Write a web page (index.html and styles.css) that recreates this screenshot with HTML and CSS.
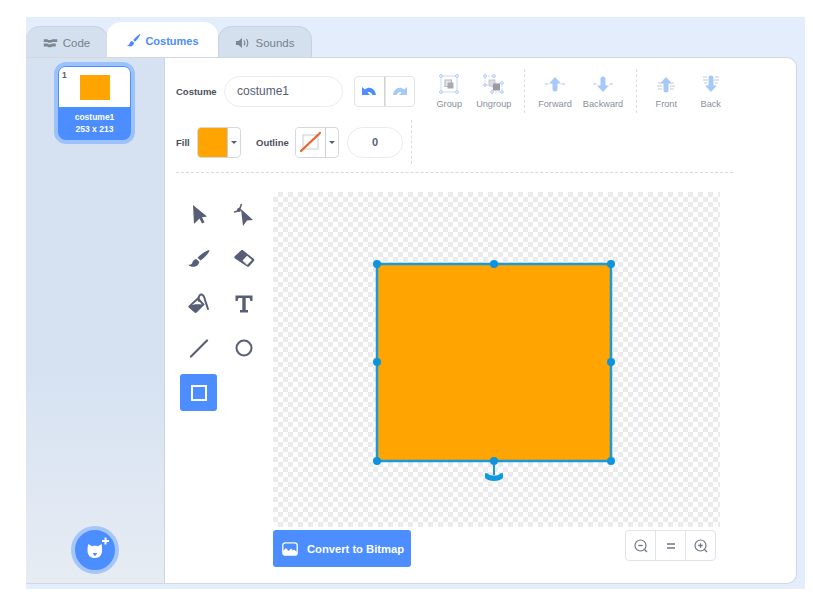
FILE: index.html
```html
<!DOCTYPE html>
<html lang="en">
<head>
    <meta charset="UTF-8">
    <title>Costumes</title>
    <link rel="stylesheet" href="styles.css">
</head>
<body>
    <div class="app">
        <div class="tabs">
            <div class="tab tab-code">
                <svg width="15" height="10" viewBox="0 0 20 12"><path d="M1 1h5l1 1h4l1-1h7v3.500h-7l-1 1H7l-1-1H1zM1 6.500h5l1 1h4l1-1h5v4h-5l-1 1H7l-1-1H1z" fill="#7d8794"/></svg>
                <span>Code</span>
            </div>
            <div class="tab tab-active">
                <svg width="15" height="15" viewBox="0 0 20 20"><path d="M18 1.500c.8-.5 1.300.2.900 1-1.500 3.200-4.300 6.800-7 9l-2.300-2.200C11.800 6.600 15 3.400 18 1.500zM8.300 10.500l2.500 2.400c-.2 2.600-2.400 5-5.300 5.100-1.600.1-3.200-.6-4-1.900 1.800.2 2.800-.7 3.300-2.200.5-2 1.800-3.200 3.500-3.400z" fill="#4c8dff"/></svg>
                <span>Costumes</span>
            </div>
            <div class="tab tab-sounds">
                <svg width="15" height="12" viewBox="0 0 15 12"><path d="M1 4h2.500L7 1v10L3.500 8H1z" fill="#7d8794"/><path d="M9 3.500c1 1.500 1 3.500 0 5M11.500 2c1.600 2.500 1.600 5.500 0 8" fill="none" stroke="#7d8794" stroke-width="1.200"/></svg>
                <span>Sounds</span>
            </div>
        </div>

        <div class="panel">
            <div class="sidebar">
                <div class="thumb">
                    <div class="thumb-top">
                        <span class="thumb-num">1</span>
                        <div class="thumb-shape"></div>
                    </div>
                    <div class="thumb-name">costume1</div>
                    <div class="thumb-size">253 x 213</div>
                </div>
                <div class="add-btn">
                    <svg width="40" height="40" viewBox="0 0 40 40">
                        <path d="M13.500 14c1.500 1 2.500 1.800 3.500 2.300 2-.6 4-.6 6 0 1-.5 2-1.300 3.500-2.300.5 2 .6 4 .6 6.500 0 5-3.200 7.500-7.300 7.500s-7.300-2.500-7.300-7.500c0-2.500.2-4.500 1-6.500z" fill="#fff"/>
                        <path d="M18 23.500h4l-2 1.500zM20 25v1" fill="#4c8dff" stroke="#4c8dff"/>
                        <path d="M29.500 7.500h2v2.500H34v2h-2.500v2.500h-2V12H27v-2h2.500z" fill="#fff"/>
                    </svg>
                </div>
            </div>

            <div class="editor">
                <div class="row row-one">
                    <span class="label label-costume">Costume</span>
                    <div class="pill pill-name">costume1</div>
                    <div class="btn-group undo-group">
                        <div class="seg seg-on">
                            <svg width="16" height="12" viewBox="0 0 16 12"><path d="M1 2v8h8L6.500 7.500c1.500-.8 3.500-.5 5 2.500h3.500C14 4 9 .5 3.800 4.500z" fill="#4c8dff"/></svg>
                        </div>
                        <div class="seg">
                            <svg width="16" height="12" viewBox="0 0 16 12"><path d="M15 2v8H7l2.500-2.500c-1.500-.8-3.500-.5-5 2.500H1C2 4 7 .5 12.200 4.500z" fill="#a6c8fb"/></svg>
                        </div>
                    </div>
                    <div class="tool-set set-group">
                        <div class="tool-item w-44">
                            <svg width="20" height="20" viewBox="0 0 20 20"><rect x="2" y="2" width="16" height="16" fill="none" stroke="#b9d0f4" stroke-width=".8"/><g fill="#fff" stroke="#a6c8fb"><circle cx="2" cy="2" r="1.400"/><circle cx="18" cy="2" r="1.400"/><circle cx="2" cy="18" r="1.400"/><circle cx="18" cy="18" r="1.400"/></g><rect x="6" y="6" width="6.500" height="6.500" fill="#e6e6ea" stroke="#b4b4bb"/><rect x="8.500" y="8.500" width="6" height="6" fill="#a9a9b2"/></svg>
                            <span>Group</span>
                        </div>
                        <div class="tool-item w-44">
                            <svg width="22" height="20" viewBox="0 0 22 20"><rect x="2" y="2" width="9" height="9" fill="none" stroke="#b9d0f4" stroke-width=".8" stroke-dasharray="2 1"/><rect x="9" y="9" width="10" height="9" fill="none" stroke="#b9d0f4" stroke-width=".8" stroke-dasharray="2 1"/><g fill="#fff" stroke="#a6c8fb"><circle cx="2" cy="2" r="1.300"/><circle cx="11" cy="2" r="1.300"/><circle cx="2" cy="11" r="1.300"/><circle cx="19" cy="9" r="1.300"/><circle cx="9" cy="18" r="1.300"/><circle cx="19" cy="18" r="1.300"/></g><rect x="6" y="6" width="6" height="6" fill="#dcdce2" stroke="#b4b4bb" stroke-width=".7"/><rect x="10" y="9.500" width="7" height="7" fill="#9a9aa5"/></svg>
                            <span>Ungroup</span>
                        </div>
                    </div>
                    <div class="tool-set set-order">
                        <div class="tool-item w-48">
                            <svg width="20" height="20" viewBox="0 0 20 20"><path d="M10 3l6 6.500h-3.500V15a2.500 2.500 0 0 1-5 0V9.500H4z" fill="#a6c8fb"/><path d="M0 10h3.500M16.500 10H20" stroke="#bcc3cc" stroke-width="1"/></svg>
                            <span>Forward</span>
                        </div>
                        <div class="tool-item w-48">
                            <svg width="20" height="20" viewBox="0 0 20 20"><path d="M10 18l-6-6.500h3.500V5a2.500 2.500 0 0 1 5 0v6.500H16z" fill="#a6c8fb"/><path d="M0 10h3.500M16.500 10H20" stroke="#bcc3cc" stroke-width="1"/></svg>
                            <span>Backward</span>
                        </div>
                    </div>
                    <div class="tool-set set-end">
                        <div class="tool-item w-44">
                            <svg width="20" height="20" viewBox="0 0 20 20"><path d="M10 3l6 6.500h-3.500V16a2.500 2.500 0 0 1-5 0V9.500H4z" fill="#a6c8fb"/><path d="M2 9h2.500M1 12h5M2 15h4M15.500 9H18M14 12h5M14 15h4" stroke="#bcc3cc" stroke-width=".9"/></svg>
                            <span>Front</span>
                        </div>
                        <div class="tool-item w-44">
                            <svg width="20" height="20" viewBox="0 0 20 20"><path d="M10 18l-6-6.500h3.500V4a2.500 2.500 0 0 1 5 0v7.500H16z" fill="#a6c8fb"/><path d="M2 3h4M2 6h5M3 9h3M14 3h4M13 6h5M14 9h3" stroke="#bcc3cc" stroke-width=".9"/></svg>
                            <span>Back</span>
                        </div>
                    </div>
                </div>

                <div class="row row-two">
                    <span class="label label-fill">Fill</span>
                    <div class="swatch">
                        <div class="swatch-color"></div>
                        <div class="swatch-arrow"><i class="caret"></i></div>
                    </div>
                    <span class="label label-outline">Outline</span>
                    <div class="swatch">
                        <div class="swatch-color swatch-none">
                            <svg width="29" height="28" viewBox="0 0 29 28"><rect x="7" y="7" width="15" height="14" fill="#fff" stroke="#c8ccd2"/><path d="M5 23L24 5" stroke="#f0602a" stroke-width="2.200" stroke-linecap="round"/></svg>
                        </div>
                        <div class="swatch-arrow"><i class="caret"></i></div>
                    </div>
                    <div class="pill pill-num">0</div>
                    <div class="vsep"></div>
                </div>

                <div class="body">
                    <div class="tools">
                        <div class="tool">
                            <svg width="20" height="22" viewBox="0 0 20 22"><path d="M4 1l14 11.500-5 .8 2.500 5-2.500 1.200-2.500-5L5 20z" fill="#575e75"/></svg>
                        </div>
                        <div class="tool">
                            <svg width="24" height="24" viewBox="0 0 24 24"><path d="M9 6l12 11-6 .5-4 5.500z" fill="#575e75"/><path d="M2 9c3 0 6-2 7.500-8" fill="none" stroke="#575e75" stroke-width="1.500"/><circle cx="7" cy="7" r="2" fill="#575e75"/></svg>
                        </div>
                        <div class="tool">
                            <svg width="24" height="22" viewBox="0 0 24 22"><path d="M22 2c.6.5.5 1 0 1.800-2 3.200-5 6.500-8.500 8.700l-3-2.700C14 6 18.500 3 22 2zM9.300 11l3 2.700c-.5 3-3 5-6 5-2 0-4-.6-5-2 2 .3 3.300-.4 4-2 .6-2 2-3.400 4-3.700z" fill="#575e75"/></svg>
                        </div>
                        <div class="tool">
                            <svg width="24" height="20" viewBox="0 0 24 20"><path d="M9 1.500c.7-.6 1.500-.6 2.200 0l10.500 8.300c.8.700.8 1.700 0 2.400l-4.500 5c-.6.600-1.500.7-2.200.2L3 9.500c-.8-.6-.9-1.700-.1-2.400z" fill="#575e75"/><path d="M10.500 11.500L15 6.800l5 4.200-5 5z" fill="#fff"/></svg>
                        </div>
                        <div class="tool">
                            <svg width="24" height="24" viewBox="0 0 24 24"><path d="M11 5L2 13.500c-.8.800-.8 1.500 0 2.300l5.500 4.700c.7.600 1.500.6 2.200 0l8-8z" fill="#575e75"/><path d="M5 13c2-1 6-1 10-.5L11 8z" fill="#fff"/><path d="M12 9c-1-3 0-6 2-6.500s3.500 2.500 4 5.500l3 9" fill="none" stroke="#575e75" stroke-width="2" stroke-linecap="round"/></svg>
                        </div>
                        <div class="tool">
                            <svg width="20" height="20" viewBox="0 0 20 20"><path d="M1.500 1.500h17v5.500h-2L15.500 4H11.700v12H14v2.500H6V16h2.300V4H4.500L3.500 7h-2z" fill="#575e75"/></svg>
                        </div>
                        <div class="tool">
                            <svg width="20" height="20" viewBox="0 0 20 20"><path d="M2 18.500L18 2.500" stroke="#575e75" stroke-width="2.200" stroke-linecap="round"/></svg>
                        </div>
                        <div class="tool">
                            <svg width="20" height="20" viewBox="0 0 20 20"><circle cx="10" cy="10" r="7.500" fill="none" stroke="#575e75" stroke-width="2"/></svg>
                        </div>
                        <div class="tool tool-on">
                            <svg width="18" height="18" viewBox="0 0 18 18"><rect x="2" y="2" width="14" height="14" fill="none" stroke="#fff" stroke-width="2"/></svg>
                        </div>
                    </div>

                    <div class="canvas-col">
                        <div class="canvas">
                            <svg class="shape" width="447" height="335" viewBox="0 0 447 335">
                                <rect x="104" y="72" width="234" height="197" fill="#ffa400" stroke="#1a9ad6" stroke-width="2.500"/>
                                <path d="M221 269v14" stroke="#1a9ad6" stroke-width="2"/>
                                <path d="M212 281l3 .5c.5 1.500 3 2 6 2s5.500-.5 6-2l3-.5v5c-2 2-5 3-9 3s-7-1-9-3z" fill="#0f9ae0"/>
                                <g fill="#0f93dd">
                                    <circle cx="104" cy="72" r="4"/><circle cx="221" cy="72" r="4"/><circle cx="338" cy="72" r="4"/>
                                    <circle cx="104" cy="170" r="4"/><circle cx="338" cy="170" r="4"/>
                                    <circle cx="104" cy="269" r="4"/><circle cx="221" cy="269" r="4"/><circle cx="338" cy="269" r="4"/>
                                </g>
                            </svg>
                        </div>
                        <div class="canvas-foot">
                            <div class="convert">
                                <svg width="16" height="14" viewBox="0 0 16 14"><rect x=".8" y=".8" width="14.400" height="12.400" rx="2.500" fill="none" stroke="#fff" stroke-width="1.300"/><path d="M1 13V9l3-3 2.500 3L9 6.500l2 2 1-1 3 2.500v3z" fill="#fff"/></svg>
                                <span>Convert to Bitmap</span>
                            </div>
                            <div class="btn-group zoom-group">
                                <div class="seg">
                                    <svg width="16" height="16" viewBox="0 0 16 16"><circle cx="7.500" cy="7.500" r="5.500" fill="none" stroke="#6f7683" stroke-width="1.200"/><path d="M11.500 11.500L14 14" stroke="#6f7683" stroke-width="1.300"/><path d="M5.300 7.500h4.400" stroke="#6f7683" stroke-width="1.300"/></svg>
                                </div>
                                <div class="seg">
                                    <svg width="16" height="16" viewBox="0 0 16 16"><path d="M4 6h8M4 10h8" stroke="#6f7683" stroke-width="1.700"/></svg>
                                </div>
                                <div class="seg">
                                    <svg width="16" height="16" viewBox="0 0 16 16"><circle cx="7.500" cy="7.500" r="5.500" fill="none" stroke="#6f7683" stroke-width="1.200"/><path d="M11.500 11.500L14 14" stroke="#6f7683" stroke-width="1.300"/><path d="M5.300 7.500h4.400M7.500 5.300v4.400" stroke="#6f7683" stroke-width="1.300"/></svg>
                                </div>
                            </div>
                        </div>
                    </div>
                </div>
            </div>
        </div>
    </div>
</body>
</html>
```

FILE: styles.css
```css
html, body {
    margin: 0;
    padding: 0;
    background-color: #fff;
}

body {
    font-family: "Liberation Sans", Arial, sans-serif;
    color: #575e75;
    height: 613px;
    overflow: hidden;
}

svg {
    display: block;
    flex: none;
}

.app {
    box-sizing: border-box;
    width: 779px;
    height: 572px;
    margin: 17px 0 0 26px;
    padding-right: 8px;
    background-color: #e3edfb;
}

/* tabs */
.tabs {
    display: flex;
    align-items: flex-end;
    height: 40px;
}

.tab {
    box-sizing: border-box;
    display: flex;
    align-items: center;
    justify-content: center;
    height: 31px;
    padding-top: 2px;
    background-color: #d5e0ee;
    border: 1px solid #c6d3e2;
    border-bottom: none;
    border-radius: 14px 14px 0 0;
    font-size: 11.500px;
    color: #78818e;
    gap: 5px;
}

.tab-code {
    width: 82px;
    border-left: none;
}

.tab-sounds {
    width: 94px;
    gap: 5px;
}

.tab-active {
    width: 111px;
    height: 35px;
    margin-left: -1px;
    padding-top: 2px;
    background-color: #fff;
    border: none;
    color: #4c8dff;
    font-weight: bold;
    font-size: 11px;
    gap: 4px;
    position: relative;
    z-index: 1;
}

/* main panel */
.panel {
    display: flex;
    box-sizing: border-box;
    height: 527px;
    background-color: #fff;
    border: 1px solid #d0d8e4;
    border-left: none;
    border-radius: 0 10px 10px 0;
    overflow: hidden;
}

.sidebar {
    box-sizing: border-box;
    width: 139px;
    display: flex;
    flex-direction: column;
    align-items: center;
    justify-content: space-between;
    padding: 4px 0 9px;
    background: linear-gradient(#d6e2f2 60%, #e7ecf3);
    border-right: 1px solid #ccd6e3;
}

.thumb {
    box-sizing: border-box;
    width: 81px;
    height: 82px;
    margin-right: 1px;
    padding: 1px 1px 0;
    background-color: #4c8dff;
    border: 4px solid #9cc2fb;
    border-radius: 12px;
    color: #fff;
    font-weight: bold;
    font-size: 8.500px;
    text-align: center;
    line-height: 12px;
}

.thumb-top {
    position: relative;
    height: 40px;
    background-color: #fff;
    border-radius: 6px 6px 0 0;
    display: flex;
    align-items: center;
    justify-content: center;
    margin-bottom: 4px;
}

.thumb-num {
    position: absolute;
    top: 2px;
    left: 3px;
    color: #575e75;
}

.thumb-shape {
    width: 30px;
    height: 25px;
    margin-top: 1px;
    background-color: #ffa400;
}

.add-btn {
    box-sizing: border-box;
    width: 48px;
    height: 48px;
    margin-right: 1px;
    background-color: #4c8dff;
    border: 4px solid #a5c6f8;
    border-radius: 50%;
    display: flex;
    align-items: center;
    justify-content: center;
}

/* editor */
.editor {
    flex: 1;
    padding: 11px 0 0 11px;
    min-width: 0;
}

.row {
    display: flex;
    align-items: center;
}

.row-one {
    height: 44px;
}

.row-two {
    height: 44px;
    margin-top: 7px;
    width: 557px;
    padding-bottom: 8px;
    border-bottom: 1px dashed #d9d9d9;
}

.label {
    font-size: 9.500px;
    font-weight: bold;
    color: #4a4f5c;
}

.label-costume {
    width: 48px;
}

.label-fill {
    width: 21px;
}

.label-outline {
    margin-left: 15px;
    width: 39px;
}

.pill {
    box-sizing: border-box;
    display: flex;
    align-items: center;
    height: 31px;
    border: 1px solid #e8ecf1;
    border-radius: 16px;
    color: #575e75;
    font-size: 12px;
}

.pill-name {
    width: 119px;
    padding-left: 12px;
}

.pill-num {
    width: 56px;
    margin-left: 8px;
    margin-right: 8px;
    justify-content: center;
    font-weight: bold;
    font-size: 11px;
}

.vsep {
    height: 44px;
    border-left: 1px dashed #dcdcdc;
}

.btn-group {
    display: flex;
    box-sizing: border-box;
    border: 1px solid #e3e3e6;
    border-radius: 4px;
}

.seg {
    flex: 1;
    display: flex;
    align-items: center;
    justify-content: center;
    border-left: 1px solid #e3e3e6;
}

.seg:first-child {
    border-left: none;
}

.undo-group {
    width: 61px;
    height: 31px;
    margin-left: 11px;
}

.seg-on {
    border-right: 1px solid #d5d5d8;
}

.tool-set {
    display: flex;
    align-items: center;
    height: 44px;
}

.set-group {
    width: 109px;
    padding-left: 12px;
    box-sizing: border-box;
}

.set-order {
    box-sizing: border-box;
    width: 112px;
    padding-left: 6px;
    border-left: 1px dashed #dcdcdc;
}

.set-end {
    box-sizing: border-box;
    padding-left: 7px;
    border-left: 1px dashed #dcdcdc;
}

.tool-item {
    display: flex;
    flex-direction: column;
    align-items: center;
    gap: 5px;
    font-size: 9.200px;
    color: #8a8f99;
}

.w-44 {
    width: 44.500px;
}

.w-48 {
    width: 48px;
}

.body {
    display: flex;
    margin-top: 19px;
}

.tools {
    display: grid;
    grid-template-columns: 37px 37px;
    grid-auto-rows: 37px;
    column-gap: 8px;
    row-gap: 7.500px;
    align-content: start;
    margin: 4px 11px 0 4px;
}

.tool {
    display: flex;
    align-items: center;
    justify-content: center;
    border-radius: 3px;
}

.tool-on {
    background-color: #4c8dff;
}

.canvas-col {
    width: 447px;
}

.canvas {
    position: relative;
    height: 335px;
    background: repeating-conic-gradient(#ebebeb 0 25%, #fff 0 50%) 0 0 / 10px 10px;
}

.shape {
    position: absolute;
    top: 0;
    left: 0;
}

.canvas-foot {
    display: flex;
    align-items: flex-start;
    justify-content: space-between;
    margin-top: 3px;
    padding-right: 4px;
}

.convert {
    display: flex;
    align-items: center;
    gap: 9px;
    box-sizing: border-box;
    width: 138px;
    height: 37px;
    padding-left: 9px;
    background-color: #4c8dff;
    border-radius: 3px;
    color: #fff;
    font-size: 11.200px;
    font-weight: bold;
    white-space: nowrap;
}

.zoom-group {
    width: 91px;
    height: 31px;
}

/* fill + outline */
.swatch {
    box-sizing: border-box;
    display: flex;
    width: 44px;
    height: 31px;
    border: 1px solid #d8d8dc;
    border-radius: 4px;
    overflow: hidden;
}

.swatch-color {
    width: 29px;
    background-color: #ffa400;
    border-right: 1px solid #cfcfd3;
}

.swatch-none {
    background-color: #fff;
}

.swatch-arrow {
    flex: 1;
    display: flex;
    align-items: center;
    justify-content: center;
}

.caret {
    width: 0;
    height: 0;
    border-left: 3.500px solid transparent;
    border-right: 3.500px solid transparent;
    border-top: 3.500px solid #575e75;
}
```
